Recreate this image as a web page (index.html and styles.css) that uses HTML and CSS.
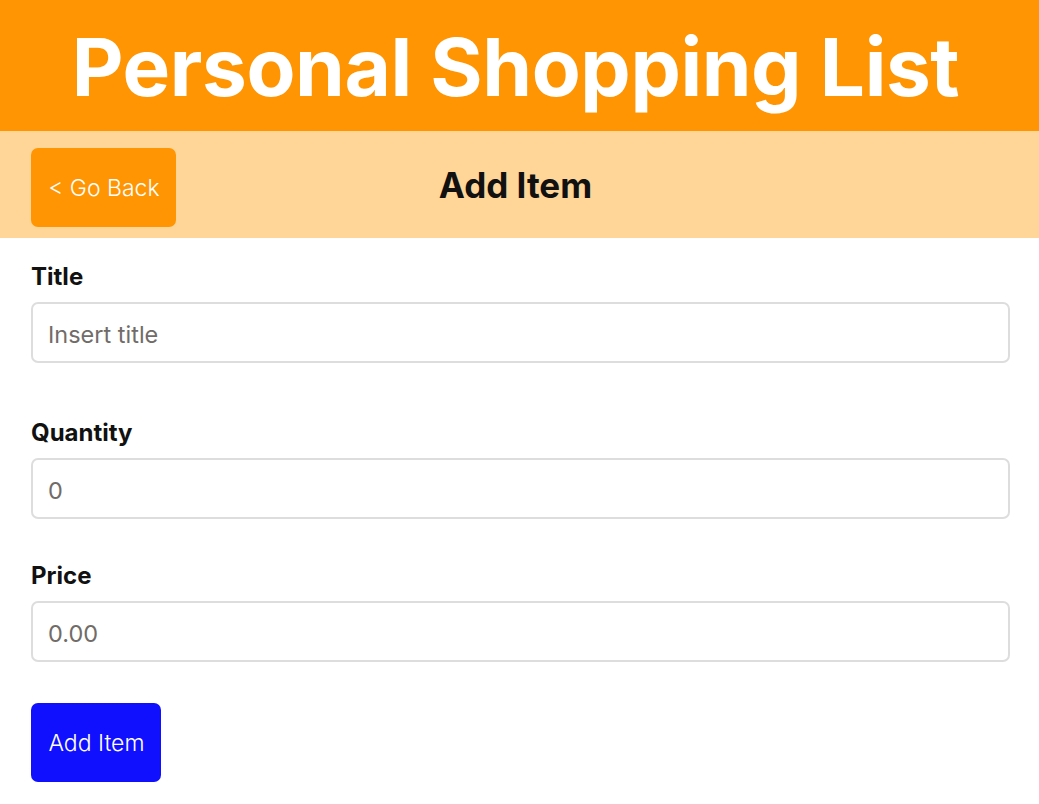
FILE: index.html
```html
<!DOCTYPE html>
<html lang="en">
<head>
<meta charset="utf-8">
<title>Personal Shopping List</title>
<link rel="stylesheet" href="styles.css">
</head>
<body>
  <header class="app-header">
    <h1 class="app-title">Personal Shopping List</h1>
  </header>
  <div class="subheader">
    <button class="btn btn-back" type="button">&lt; Go Back</button>
    <h2 class="page-title">Add Item</h2>
  </div>
  <form class="item-form">
    <div class="form-group form-group-first">
      <label class="form-label" for="title">Title</label>
      <input class="form-input" id="title" type="text" placeholder="Insert title">
    </div>
    <div class="form-group">
      <label class="form-label" for="quantity">Quantity</label>
      <input class="form-input" id="quantity" type="text" placeholder="0">
    </div>
    <div class="form-group form-group-last">
      <label class="form-label" for="price">Price</label>
      <input class="form-input" id="price" type="text" placeholder="0.00">
    </div>
    <button class="btn btn-submit" type="button">Add Item</button>
  </form>
</body>
</html>
```
FILE: styles.css
```css
* {
  box-sizing: border-box;
}

html, body {
  margin: 0;
  padding: 0;
  background: #ffffff;
  font-family: "Inter", "Liberation Sans", sans-serif;
  color: #111111;
}

.app-header {
  height: 131px;
  background: #ff9502;
  display: flex;
  align-items: center;
  justify-content: center;
  padding: 2px 8px 0 0;
}

.app-title {
  margin: 0;
  color: #ffffff;
  font-size: 80px;
  font-weight: 700;
  line-height: 1;
  letter-spacing: -0.4px;
}

.subheader {
  height: 107px;
  background: #ffd697;
  display: grid;
  grid-template-columns: 1fr auto 1fr;
  align-items: center;
  padding: 0 39px 0 31px;
}

.page-title {
  margin: 0;
  font-size: 35px;
  font-weight: 700;
  color: #111111;
  text-align: center;
}

.btn {
  border: none;
  border-radius: 7px;
  height: 79px;
  padding: 0 16px 0 17px;
  font-family: "Inter", "Liberation Sans", sans-serif;
  font-size: 23px;
  font-weight: 300;
  color: #ffffff;
  cursor: pointer;
}

.btn-back {
  justify-self: start;
  width: 145px;
  margin-top: 6px;
  background: #ff9502;
}

.btn-submit {
  width: 130px;
  background: #1010ff;
}

.item-form {
  padding: 25px 29px 0 31px;
}

.form-group {
  margin-bottom: 43px;
}

.form-group-first {
  margin-bottom: 56px;
}

.form-group-last {
  margin-bottom: 41px;
}

.form-label {
  display: block;
  font-size: 24px;
  font-weight: 700;
  line-height: 28px;
  margin-bottom: 11px;
  color: #111111;
}

.form-input {
  display: block;
  width: 100%;
  height: 61px;
  border: 2px solid #dddddd;
  border-radius: 7px;
  padding: 4px 15px 0;
  font-family: "Inter", "Liberation Sans", sans-serif;
  font-size: 23.5px;
  color: #333333;
  background: #ffffff;
  outline: none;
}

.form-input::placeholder {
  color: #716c68;
}
```
